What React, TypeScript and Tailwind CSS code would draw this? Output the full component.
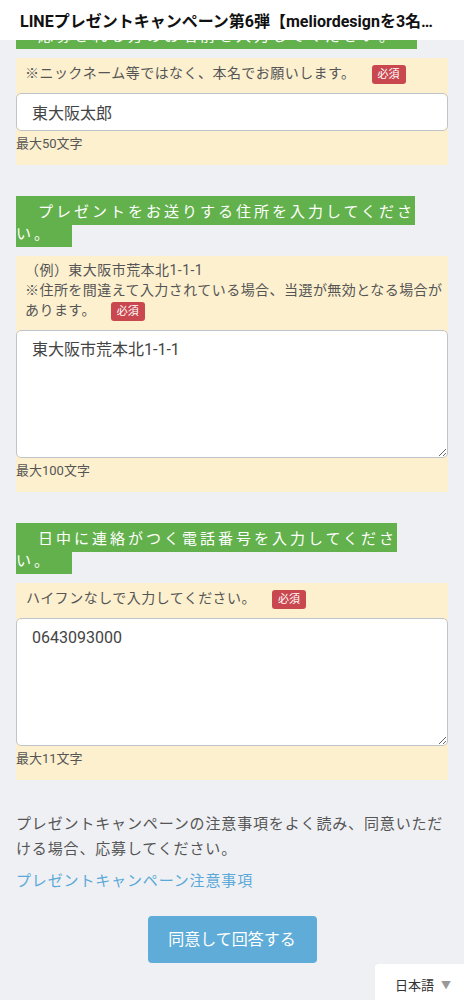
import React from 'react';

const Heading: React.FC<{ line1: string; line2?: string }> = ({ line1, line2 }) => (
  <div className="font-['Noto_Sans_CJK_JP','Noto_Sans',sans-serif] text-[15px] leading-[22px] tracking-[3px] text-white">
    <span className="bg-[#63b14c] py-1 pl-1 pr-5">
      {'\u3000' + line1}
      {line2 && (
        <>
          <br />
          {line2}
        </>
      )}
    </span>
  </div>
);

const Required: React.FC<{ className?: string }> = ({ className = '' }) => (
  <span
    className={`-my-[3px] inline-block h-[19px] rounded-[3px] bg-[#c9484f] px-[6px] align-middle text-[11px] leading-[19px] tracking-normal text-white ${className}`}
  >
    必須
  </span>
);

const Limit: React.FC<{ text: string }> = ({ text }) => (
  <p className="mt-[3px] text-[13px] leading-[20px] text-[#555]">{text}</p>
);

const App: React.FC = () => {
  return (
    <div className="min-h-[1000px] bg-[#eff0f4] font-['Roboto','Noto_Sans_CJK_JP',sans-serif]">
      <header className="flex h-10 items-center bg-white px-5 pt-[3px]">
        <h1 className="truncate text-[16px] font-bold text-[#111]">
          LINEプレゼントキャンペーン第6弾【meliordesignを3名様にプレゼント】
        </h1>
      </header>

      <main className="px-4 pb-10">
        {/* name (heading scrolled out of view) */}
        <div className="h-[10px] overflow-hidden">
          <div className="-mt-[16px]">
            <Heading line1="応募される方のお名前を入力してください。" />
          </div>
        </div>

        <section className="mt-2 bg-[#fcf0cf] pt-[5px] pb-[11px]">
          <p className="pl-[9px] text-[14px] leading-[20px] tracking-[0.45px] text-[#555]">
            ※ニックネーム等ではなく、本名でお願いします。
            <Required className="ml-4" />
          </p>
          <input
            type="text"
            defaultValue="東大阪太郎"
            className="mt-[10px] block h-[38px] w-full rounded-[5px] border border-[#bfc3ca] bg-white pl-[15px] text-[16px] text-[#444] outline-none"
          />
          <Limit text="最大50文字" />
        </section>

        {/* address */}
        <div className="mt-[35px]">
          <Heading line1="プレゼントをお送りする住所を入力してくださ" line2="い。" />
        </div>

        <section className="mt-3 bg-[#fcf0cf] pt-1 pb-[11px]">
          <p className="pl-[9px] text-[14px] leading-[20px] tracking-[0.45px] text-[#555]">
            （例）東大阪市荒本北1-1-1
            <br />
            ※住所を間違えて入力されている場合、当選が無効となる場合があります。
            <Required className="ml-[15px]" />
          </p>
          <textarea
            defaultValue="東大阪市荒本北1-1-1"
            className="mt-[10px] block h-[128px] w-full rounded-[5px] border border-[#bfc3ca] bg-white pl-[15px] pt-[7px] text-[16px] leading-6 text-[#444] outline-none"
          />
          <Limit text="最大100文字" />
        </section>

        {/* phone */}
        <div className="mt-[35px]">
          <Heading line1="日中に連絡がつく電話番号を入力してくださ" line2="い。" />
        </div>

        <section className="mt-3 bg-[#fcf0cf] pt-[5px] pb-[11px]">
          <p className="pl-[10px] text-[14px] leading-[20px] tracking-[0.45px] text-[#555]">
            ハイフンなしで入力してください。
            <Required className="ml-4" />
          </p>
          <textarea
            defaultValue="0643093000"
            className="mt-[10px] block h-[128px] w-full rounded-[5px] border border-[#bfc3ca] bg-white pl-[15px] pt-[7px] text-[16px] leading-6 text-[#444] outline-none"
          />
          <Limit text="最大11文字" />
        </section>

        <p className="mt-[32px] text-[15px] leading-[25px] tracking-[0.85px] text-[#555]">
          プレゼントキャンペーンの注意事項をよく読み、同意いただける場合、応募してください。
        </p>
        <a className="mt-[7px] block text-[15px] leading-[25px] tracking-[0.85px] text-[#5ba9d8]">
          プレゼントキャンペーン注意事項
        </a>

        <div className="mt-[22px] flex justify-center">
          <button className="h-[47px] w-[169px] rounded-[4px] bg-[#5eacd7] text-[16px] text-white">
            同意して回答する
          </button>
        </div>
      </main>

      <div className="fixed right-0 bottom-0 flex h-[36px] w-[89px] items-start gap-[7px] rounded-tl-[4px] bg-white pt-[12px] pl-[20px]">
        <span className="text-[13px] leading-[20px] text-[#333]">日本語</span>
        <span className="text-[10px] leading-[20px] text-[#999]">▼</span>
      </div>
    </div>
  );
};

export default App;
